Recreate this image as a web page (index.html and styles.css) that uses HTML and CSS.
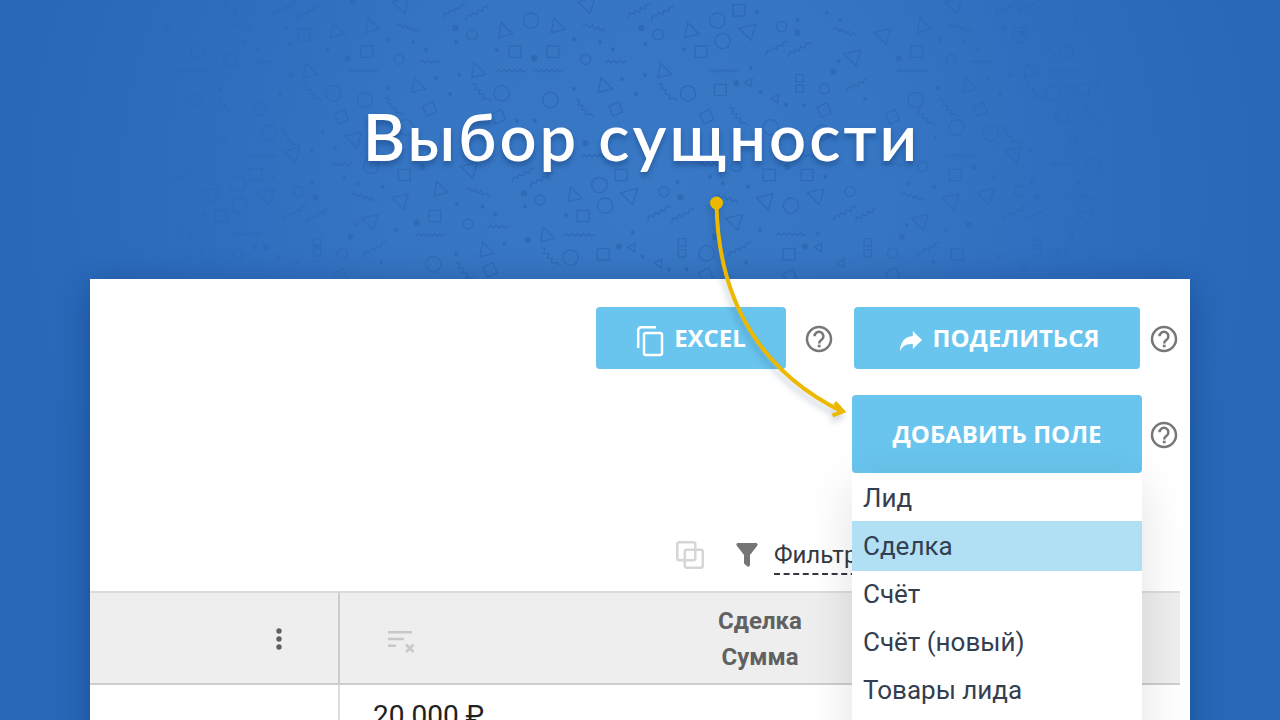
FILE: index.html
```html
<!DOCTYPE html>
<html lang="ru">
<head>
<meta charset="utf-8">
<title>Выбор сущности</title>
<link rel="stylesheet" href="styles.css">
</head>
<body>
<svg class="defs" width="0" height="0" aria-hidden="true">
  <symbol id="help" viewBox="0 0 28 28"><circle cx="14" cy="14" r="12" fill="none" stroke="#777" stroke-width="2.5"/><path d="M9.6 11.2a4.4 4.4 0 1 1 7.4 3.2c-1.6 1.3-2.8 2-2.8 4" fill="none" stroke="#777" stroke-width="2.5"/><path d="M12.8 19.7h2.8v2.6h-2.8z" fill="#777"/></symbol>
</svg>
<main class="page">
  <svg class="confetti" viewBox="0 0 1280 280" preserveAspectRatio="xMidYMin slice" aria-hidden="true">
    <defs>
      <g id="t"><path d="M-18 20L-10 -24L24 10Z"/></g>
      <g id="d"><path d="M-28 -10L22 -22L8 26Z"/></g>
      <g id="c"><circle r="23"/></g>
      <g id="o"><circle r="15"/></g>
      <g id="q"><path d="M-18 -17H18V17H-18Z"/></g>
      <g id="s"><path d="M-11 -11H11V11H-11Z"/></g>
      <g id="r"><path d="M-21 -8L9 -22L21 9L-8 22Z"/></g>
      <g id="w"><path d="M-46 3L-38 -4L-30 4L-22 -4L-14 4L-6 -4L2 4L10 -4L18 4L26 -4L34 4L45 -3"/></g>
      <g id="v"><path d="M-31 3L-22 -4L-14 4L-5 -4L3 4L12 -4L20 4L31 -3"/></g>
      <g id="z"><path d="M-34 22L-29 7L-17 9L-12 -2L0 3L4 -10L17 -6L20 -18L34 -22"/></g>
      <g id="y"><path d="M-37 -8L-25 -13L-17 -2L-7 -9L0 3L10 -4L16 8L26 2L36 13"/></g>
      <g id="n"><path d="M-28 -28L-15 -24L-19 -10L-5 -9L-8 4L6 6L4 19L17 17L31 25"/></g>
      <g id="m"><path d="M-12 0L11 -13L8 13Z"/></g>
      <g id="b"><path class="solid" d="M-10 -7L2 -10L10 -3L7 8L-7 9Z"/></g>
      <g id="p"><path class="solid" d="M-6 -5L4 -6L6 4L-3 7Z"/></g>
    </defs>
  </svg>
  <header class="hero"><h1 class="title">Выбор сущности</h1></header>
  <section class="card">
    <div class="toolbar">
      <button class="btn btn-excel" type="button">
        <svg width="28" height="32" viewBox="0 0 28 32" fill="none" stroke="#fff" stroke-width="2.5"><path d="M2.2 23V5.500Q2.200 2.200 5.500 2.200H20"/><rect x="8" y="8" width="18" height="22" rx="2"/></svg>
        <span>EXCEL</span>
      </button>
      <button class="help help-excel" type="button" aria-label="Справка: Excel"><svg width="28" height="28"><use href="#help"/></svg></button>
      <button class="btn btn-share" type="button">
        <svg width="24" height="22" viewBox="0 0 26 22" preserveAspectRatio="none"><path d="M15 1L25 10L15 19V14Q5 13 1 21Q2 7 15 6Z" fill="#fff"/></svg>
        <span>ПОДЕЛИТЬСЯ</span>
      </button>
      <button class="help" type="button" aria-label="Справка: поделиться"><svg width="28" height="28"><use href="#help"/></svg></button>
    </div>
    <div class="toolbar add-row">
      <div class="dropdown">
        <button class="btn btn-add" type="button" aria-haspopup="menu" aria-expanded="true">ДОБАВИТЬ ПОЛЕ</button>
        <div class="menu" role="menu">
          <button class="item" type="button" role="menuitem">Лид</button>
          <button class="item active" type="button" role="menuitem">Сделка</button>
          <button class="item" type="button" role="menuitem">Счёт</button>
          <button class="item" type="button" role="menuitem">Счёт (новый)</button>
          <button class="item" type="button" role="menuitem">Товары лида</button>
        </div>
      </div>
      <button class="help" type="button" aria-label="Справка: добавить поле"><svg width="28" height="28"><use href="#help"/></svg></button>
    </div>
    <div class="filters">
      <svg class="layers" width="28" height="28" viewBox="0 0 28 28" fill="none" stroke="#d6d6d6" stroke-width="2.500"><rect x="1.300" y="1.300" width="18" height="18" rx="2"/><rect x="8.800" y="8.800" width="18" height="18" rx="2"/></svg>
      <svg class="funnel" width="22" height="24" viewBox="0 0 22 24"><path d="M1.500 0H20.500Q22.500 1 21 3L14 12V22Q13.500 24.500 11.500 23.500L8.500 21Q8 20.500 8 19.500V12L1 3Q-.5 1 1.500 0Z" fill="#757575"/></svg>
      <a class="filter-link" href="#filters">Фильтры</a>
    </div>
    <table class="grid" id="filters">
      <thead>
        <tr>
          <th class="col-first"><button class="dots" type="button" aria-label="Меню столбца"><svg width="8" height="22" viewBox="0 0 8 22" fill="#616161"><circle cx="4" cy="3" r="2.700"/><circle cx="4" cy="11" r="2.700"/><circle cx="4" cy="19" r="2.700"/></svg></button></th>
          <th>
            <div class="head">
              <svg class="sort" width="28" height="24" viewBox="0 0 28 24" fill="none" stroke="#c8c8c8" stroke-width="2.500"><path d="M0 2.300H24M0 9H16M0 15.700H8M18 14.500L25.500 22M25.500 14.500L18 22"/></svg>
              <span>Сделка<br>Сумма</span>
            </div>
          </th>
        </tr>
      </thead>
      <tbody><tr><td class="col-first"></td><td>20 000 ₽</td></tr></tbody>
    </table>
  </section>
  <svg class="arrow" width="160" height="240" viewBox="700 190 160 240" fill="none" stroke="#edb900" stroke-width="4" aria-hidden="true"><circle cx="716.500" cy="203" r="6.500" fill="#edb900" stroke="none"/><path d="M716.500 203C718 306 765 374 843 412M835 402.500L843 411.500L832.500 415.500"/></svg>
</main>
<script src="confetti.js"></script>
</body>
</html>
```

FILE: styles.css
```css
* { box-sizing: border-box; }
body { margin: 0; font-family: Roboto, "Noto Sans", sans-serif; }
button { border: 0; padding: 0; background: none; font: inherit; color: inherit; cursor: pointer; }
svg { display: block; flex: none; }
.defs { position: absolute; }
.page {
  position: relative;
  display: flex;
  flex-direction: column;
  height: 100vh;
  overflow: hidden;
  background: radial-gradient(ellipse 620px 600px at 50% 190px, #3878c5 0%, #3675c2 40%, #2e6ebe 68%, #2768b8 100%);
}
.confetti {
  position: absolute;
  top: 0;
  left: 0;
  width: 100%;
  height: 280px;
  fill: none;
  stroke: #1e58a2;
  stroke-width: 4;
  opacity: .4;
  mask-image: radial-gradient(ellipse 570px 600px at 50% 160px, #000 0%, rgba(0, 0, 0, .9) 35%, rgba(0, 0, 0, .5) 65%, transparent 100%);
}
.solid { fill: #1e58a2; stroke: none; }
.hero {
  position: relative;
  flex: none;
  height: 279px;
  padding: 96px 0 0 3px;
  text-align: center;
}
.title {
  margin: 0;
  color: #fff;
  font: 600 65px/80px Lato, Inter, sans-serif;
  letter-spacing: 3px;
  text-shadow: 0 4px 5px rgba(10, 40, 90, .35);
}
.card {
  position: relative;
  flex: 1 0 auto;
  margin: 0 90px;
  padding: 28px 0 0;
  background: #fff;
  box-shadow: 0 6px 28px rgba(10, 40, 90, .38);
}
.toolbar {
  display: flex;
  align-items: center;
  justify-content: flex-end;
  gap: 10px;
  padding-right: 12px;
}
.add-row { gap: 8px; margin-top: 26px; }
.btn {
  display: flex;
  align-items: center;
  justify-content: center;
  gap: 10px;
  height: 62px;
  border-radius: 4px;
  background: #69c5ee;
  color: #fff;
  font: 700 24px/32px "Open Sans", sans-serif;
}
.btn svg { margin-top: 6px; }
.btn-excel { width: 190px; }
.btn-share { width: 286px; padding-left: 4px; }
.btn-add { width: 290px; height: 78px; }
.help { padding-top: 2px; }
.help-excel { margin: 0 11px 0 9px; }
.dropdown { position: relative; }
.menu {
  position: absolute;
  z-index: 2;
  top: 100%;
  left: 0;
  width: 100%;
  padding: 1px 0 48px;
  background: #fff;
  box-shadow: 0 12px 44px rgba(0, 0, 0, .12);
}
.item {
  display: block;
  width: 100%;
  padding: 0 11px;
  color: #333e50;
  font-size: 26px;
  line-height: 48px;
  text-align: left;
}
.item.active { background: #b1e0f5; box-shadow: 0 1px #b1e0f5, 0 -1px #b1e0f5; }
.filters {
  display: flex;
  align-items: center;
  justify-content: flex-end;
  height: 118px;
  padding: 46px 314px 0 0;
}
.funnel { margin: 0 16px 0 32px; }
.filter-link {
  margin-top: 2px;
  border-bottom: 2px dashed #333840;
  color: #333840;
  font-size: 24px;
  line-height: 36px;
  text-decoration: none;
}
.grid { width: calc(100% - 10px); border-collapse: separate; border-spacing: 0; table-layout: fixed; }
.grid th {
  height: 94px;
  padding: 2px 48px 0;
  border-top: 2px solid #dcdcdc;
  border-bottom: 2px solid #cdcdcd;
  background: #eee;
  color: #616161;
  font-size: 24px;
  line-height: 36px;
}
.grid .col-first { width: 250px; border-right: 2px solid #cdcdcd; }
.grid td.col-first { border-right-color: #dcdcdc; }
.dots { display: block; margin: 0 7px 0 auto; }
.head { display: grid; grid-template-columns: 1fr auto 1fr; align-items: center; }
.sort { margin-top: 6px; }
.grid td { height: 60px; padding: 0 33px; color: #212121; font-size: 28px; }
.arrow { position: absolute; z-index: 3; top: 190px; left: calc(50% + 60px); filter: drop-shadow(-2px 5px 3px rgba(20, 50, 90, .22)); }
```

FILE: confetti.js
```js
// Each panel is drawn on a grid of three units to the pixel.
// Entries: shape id, then x,y pairs.
const panels = [
  [100, {
    t: "710,92 815,78 628,213 1133,213 953,257 1020,568 1158,750",
    d: "905,15 398,18 763,418 578,463 1110,510 500,588 903,603 812,665 333,585",
    c: "700,280 795,300 507,400 813,498 413,553 418,617 1000,793 1198,278 918,382",
    o: "1116,104 597,575 413,763 897,178 1103,672 727,760",
    q: "292,155 800,155 390,180 468,523 913,525 1005,648 364,648 322,768 288,300 612,103",
    s: "651,727 651,757",
    r: "480,327 989,327 725,350 1195,350 1170,810 720,828 253,705",
    w: "788,212 277,210 482,467 993,705 438,702",
    v: "485,185 990,185 723,493 1190,680",
    z: "553,28 622,38 1062,33 1130,40 583,640 655,647 825,748 250,530",
    y: "925,85 418,85 790,592 1133,577",
    n: "638,278 1145,278 882,320 380,318 570,415 1095,815",
    b: "758,5 1066,84 743,175 647,592 967,502 950,668 752,710 463,742 500,742 200,85 650,742",
    p: "560,85 570,132 940,127 978,148 1068,127 864,118 683,148 572,225 1077,225 1007,235 864,265 540,283 1050,282 667,397 635,452 705,443 733,535 773,550 848,560 636,547 517,530 1070,612 1147,620 1185,643 768,675 887,690 312,642 183,578 843,787 1068,762 537,773 590,790 356,120 433,128 470,148 358,268 372,430"
  }],
  [500, {
    t: "14,92 172,78 492,213 313,257 573,92 222,585 140,705",
    d: "262,15 745,95 1060,172 797,603 705,665 390,588 950,588",
    c: "93,62 652,62 668,123 5,280 151,300 564,280 298,555 315,617 873,617 212,773 812,382 620,760 965,398",
    o: "257,178 474,104 492,575 845,80 709,500 120,600 1050,575 973,267",
    q: "45,155 158,155 603,155 717,31 661,270 363,525 250,648 310,763 808,525 921,525 867,763",
    s: "899,234 899,266 546,727 546,760 1103,727 1103,760",
    r: "-5,350 347,327 620,350 972,330 618,825 870,830",
    w: "35,212 145,212 672,212 240,705 875,703 900,467 290,467",
    v: "347,185 -6,680 630,493",
    z: "418,33 488,40 830,145 898,150 70,525 125,540 477,640 548,647 720,748 1035,640 1100,645 1073,255",
    y: "285,85 1035,97 680,597",
    n: "503,278 253,325 715,350 150,770",
    m: "745,247 825,295 395,742 475,790 955,742 1023,790",
    b: "103,175 424,85 893,98 709,250 1000,215 72,580 541,592 862,502 83,720 357,740 915,740 645,710 257,430",
    p: "-10,150 222,118 300,127 338,148 436,133 553,148 980,38 1020,58 893,60 1015,183 366,237 435,225 221,267 408,282 50,363 105,363 782,276 752,205 858,315 913,316 532,547 668,550 630,530 745,560 75,620 -15,643 198,645 13,730 398,697 428,770 507,808 560,808 738,788 780,690 953,700 1095,297 770,35 975,530"
  }],
  [880, {
    t: "130,78 267,257 450,213",
    d: "223,15 10,107 215,603 320,588 123,665 402,463 620,650",
    c: "107,300 230,382 332,400 520,280 640,500 420,105 610,60",
    o: "213,178 128,500 418,573 38,760 545,760",
    q: "110,155 560,155 608,270 226,525 232,763",
    s: "473,727 473,757 570,270",
    r: "37,350 300,327 545,350 38,825",
    w: "98,212 550,212 240,467",
    v: "303,185 545,493 35,493",
    z: "145,748 405,640 467,647 380,28 450,20",
    y: "243,85 100,592 610,592",
    n: "135,350 208,325 390,405 465,275 635,345",
    m: "580,422",
    b: "56,175 282,502 266,675 66,710 470,592 373,85 427,100 575,710",
    p: "180,118 253,127 293,148 505,148 322,237 390,225 173,265 360,283 165,412 455,452 455,547 343,530 595,550 86,550 162,560 80,675 197,690 358,770 160,785 433,803 655,250 695,248"
  }]
];

const svg = document.querySelector(".confetti");
const ns = "http://www.w3.org/2000/svg";
for (const [left, shapes] of panels) {
  const group = document.createElementNS(ns, "g");
  group.setAttribute("transform", `translate(${left} 0) scale(${1 / 3})`);
  for (const [id, points] of Object.entries(shapes)) {
    for (const point of points.split(" ")) {
      const [x, y] = point.split(",").map(Number);
      // Neighbouring panels overlap, so each draws only its own span.
      const pageX = left + x / 3;
      if (left === 100 && pageX > 490) continue;
      if (left === 500 && pageX > 870) continue;
      const use = document.createElementNS(ns, "use");
      use.setAttribute("href", "#" + id);
      use.setAttribute("x", x);
      use.setAttribute("y", y);
      group.append(use);
    }
  }
  svg.append(group);
}
```
